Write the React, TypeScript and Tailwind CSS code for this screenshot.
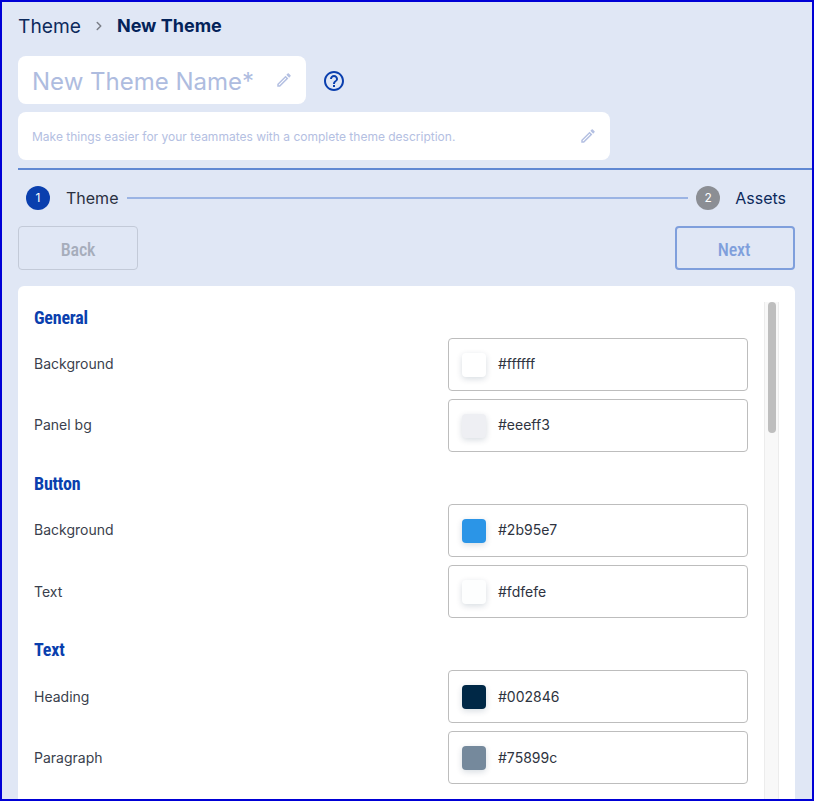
import React from "react";
import { ChevronRight } from "lucide-react";
import { MdOutlineEdit, MdOutlineHelpOutline } from "react-icons/md";

const narrow = "font-['Roboto','Open_Sans',sans-serif] [font-stretch:75%]";

type Row = { label: string; color: string; low?: boolean };
const sections: { title: string; rows: Row[] }[] = [
  { title: "General", rows: [{ label: "Background", color: "#ffffff" }, { label: "Panel bg", color: "#eeeff3" }] },
  { title: "Button", rows: [{ label: "Background", color: "#2b95e7" }, { label: "Text", color: "#fdfefe", low: true }] },
  { title: "Text", rows: [{ label: "Heading", color: "#002846", low: true }, { label: "Paragraph", color: "#75899c", low: true }] },
];

function ColorRow({ label, color, low }: Row) {
  return (
    <div className="flex items-center justify-between h-[53px]">
      <span className={low ? "text-sm text-[#3a3f4d]" : "text-sm text-[#3a3f4d] pb-[2px]"}>{label}</span>
      <div className="w-[300px] h-[53px] flex items-center gap-3 pl-[13px] rounded border border-[#bdbdbd] bg-white">
        <span className="w-6 h-6 rounded shadow-[0_2px_6px_rgba(0,40,70,0.16)]" style={{ backgroundColor: color }} />
        <span className={low ? "text-sm text-[#2e3340]" : "text-sm text-[#2e3340] pb-[2px]"}>{color}</span>
      </div>
    </div>
  );
}

export default function App() {
  return (
    <div className="w-[814px] h-[801px] overflow-hidden border-2 border-[#0000d6] bg-[#e0e7f5] font-['Inter',sans-serif]">
      <div className="pl-4 pt-[12px]">
        <div className="flex items-center h-[23px]">
          <span className="text-[19.2px] text-[#0d2a5c] pt-[1px]">Theme</span>
          <ChevronRight className="w-[14px] h-[14px] text-[#7b7f88] ml-[11px] mr-[11px]" strokeWidth={2.6} />
          <span className="text-[18px] font-bold text-[#03235a]">New Theme</span>
        </div>
        <div className="flex items-center mt-[19px]">
          <div className="w-[288px] h-12 bg-white rounded-lg flex items-center justify-between pl-[14px] pr-[13px]">
            <span className="text-2xl text-[#aebcdf] pt-[3px]">New Theme Name*</span>
            <MdOutlineEdit className="w-[18px] h-[18px] text-[#b4c0e2]" />
          </div>
          <MdOutlineHelpOutline className="w-6 h-6 ml-4 mt-[2px] text-[#0a3fae]" />
        </div>
        <div className="w-[592px] h-12 mt-2 bg-white rounded-lg flex items-center justify-between pl-[14px] pr-[13px]">
          <span className="text-xs text-[#b4c0e2] pt-[2px]">Make things easier for your teammates with a complete theme description.</span>
          <MdOutlineEdit className="w-[18px] h-[18px] text-[#b4c0e2]" />
        </div>
        <div className="h-[2px] mt-2 bg-[#6088d2]" />
      </div>

      <div className="flex items-center h-6 mt-4 pl-6 pr-[26px]">
        <span className="w-6 h-6 rounded-full bg-[#0a3fae] text-white text-xs flex items-center justify-center">1</span>
        <span className="ml-4 text-base text-[#2a3040]">Theme</span>
        <div className="flex-1 h-[2px] bg-[#9bb4e4] ml-[9px] mr-2" />
        <span className="w-6 h-6 rounded-full bg-[#8b8e94] text-white text-xs flex items-center justify-center">2</span>
        <span className="ml-[15px] text-base text-[#0d2a5c]">Assets</span>
      </div>

      <div className="flex justify-between mt-4 pl-4 pr-[17px]">
        <button className={`w-[120px] h-11 rounded border border-[#c3cad8] text-[#a6adbb] text-[18px] tracking-[-0.2px] font-medium pt-[2px] ${narrow}`}>Back</button>
        <button className={`w-[120px] h-11 rounded border-2 border-[#7f9fdc] text-[#7f9fdc] text-[18px] tracking-[-0.2px] font-medium pt-[2px] pr-[2px] ${narrow}`}>Next</button>
      </div>

      <div className="ml-4 mt-4 w-[777px] h-[600px] bg-white rounded-t-md flex pl-4 pr-[16px] pt-4">
        <div className="w-[714px]">
          {sections.map((s) => (
            <div key={s.title}>
              <h2 className={`h-[36px] text-[18px] tracking-[-0.2px] leading-[31px] font-bold text-[#0a3fae] ${narrow}`}>{s.title}</h2>
              <div className="flex flex-col gap-2 pb-4">
                {s.rows.map((r) => <ColorRow key={r.color} {...r} />)}
              </div>
            </div>
          ))}
        </div>
        <div className="ml-4 w-[15px] bg-[#f8f8f8] border-x border-[#ececec] flex justify-center">
          <div className="w-[8px] h-[131px] rounded bg-[#bebebe]" />
        </div>
      </div>
    </div>
  );
}
